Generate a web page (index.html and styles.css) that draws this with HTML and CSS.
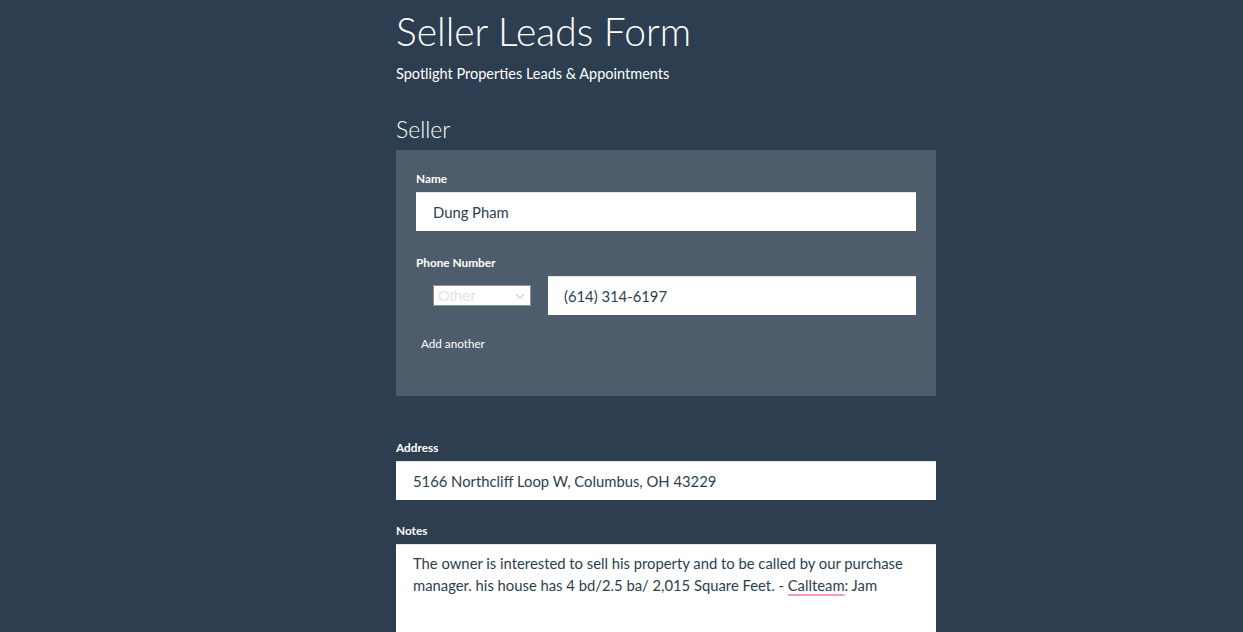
FILE: index.html
```html
<!DOCTYPE html>
<html lang="en">
<head>
<meta charset="utf-8">
<title>Seller Leads Form</title>
<link rel="stylesheet" href="styles.css">
</head>
<body>
<main class="page">
  <header class="head">
    <h1 class="title">Seller Leads Form</h1>
    <p class="subtitle">Spotlight Properties Leads &amp; Appointments</p>
  </header>
  <h2 class="section-title">Seller</h2>
  <section class="panel">
    <div class="field">
      <label class="label">Name</label>
      <div class="input">Dung Pham</div>
    </div>
    <div class="field field-phone">
      <label class="label">Phone Number</label>
      <div class="phone-row">
        <div class="select">
          <span>Other</span>
          <svg class="chev" width="10" height="6" viewBox="0 0 10 6"><path d="M1 1l4 4 4-4" fill="none" stroke="#d0d0d0" stroke-width="1.3"/></svg>
        </div>
        <div class="input input-phone">(614) 314-6197</div>
      </div>
    </div>
    <a class="add-link">Add another</a>
  </section>
  <div class="field field-address">
    <label class="label">Address</label>
    <div class="input input-wide">5166 Northcliff Loop W, Columbus, OH 43229</div>
  </div>
  <div class="field field-notes">
    <label class="label">Notes</label>
    <div class="textarea">The owner is interested to sell his property and to be called by our purchase manager. his house has 4 bd/2.5 ba/ 2,015 Square Feet. - <span class="misspell">Callteam</span>: Jam</div>
  </div>
</main>
</body>
</html>
```

FILE: styles.css
```css
html, body {
  margin: 0;
  padding: 0;
  background: #2c3e50;
  font-family: "Lato", "Liberation Sans", sans-serif;
  color: #ffffff;
  overflow: hidden;
}

.page {
  width: 540px;
  margin-left: 396px;
  padding-top: 7px;
}

.title {
  margin: 0;
  font-size: 39px;
  font-weight: 300;
  line-height: 48px;
}

.subtitle {
  margin: 9px 0 0;
  font-size: 14.5px;
  line-height: 20px;
}

.section-title {
  margin: 30px 0 0;
  font-size: 23px;
  font-weight: 300;
  line-height: 30px;
}

.panel {
  margin-top: 6px;
  background: #4e5d6c;
  padding: 22px 20px 0;
  height: 224px;
}

.field {
  display: flex;
  flex-direction: column;
}

.label {
  font-size: 11.8px;
  font-weight: 700;
  line-height: 14px;
  margin-bottom: 6px;
}

.input {
  background: #fff;
  border-top: 1px solid #e2e4e6;
  height: 38px;
  box-sizing: content-box;
  padding: 0 17px;
  display: flex;
  align-items: center;
  font-size: 14.8px;
  color: #2c3e50;
}

.field-phone {
  margin-top: 25px;
}

.phone-row {
  display: flex;
  align-items: center;
  gap: 17px;
}

.select {
  margin-left: 17px;
  border: 1px solid #8a8f94;
  background: #fff;
  display: flex;
  align-items: center;
  justify-content: space-between;
  padding: 0 4px;
  box-sizing: border-box;
  width: 98px;
  height: 21px;
  font-family: "Liberation Sans", sans-serif;
  font-size: 15px;
  color: #e3e3e3;
}

.chev {
  margin-right: 1px;
}

.input-phone {
  flex: 1;
  padding-left: 16px;
}

.add-link {
  display: block;
  margin: 20px 0 0 5px;
  font-size: 11.7px;
  line-height: 16px;
  color: #fff;
}

.field-address {
  margin-top: 45px;
}

.field-notes {
  margin-top: 24px;
}

.textarea {
  background: #fff;
  border-top: 1px solid #e2e4e6;
  min-height: 120px;
  padding: 7px 17px;
  font-size: 14.8px;
  line-height: 22px;
  color: #2c3e50;
}

.misspell {
  text-decoration: underline;
  text-decoration-color: #f49cb0;
  text-decoration-thickness: 2px;
  text-underline-offset: 3px;
}
```
